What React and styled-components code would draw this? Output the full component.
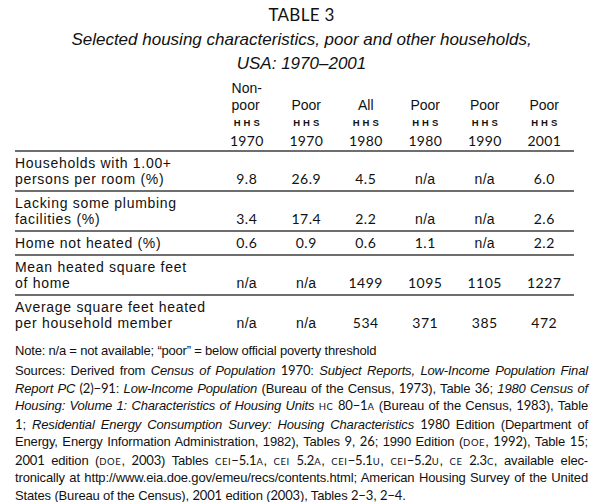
import React from "react";
import styled, { createGlobalStyle } from "styled-components";

const GlobalStyle = createGlobalStyle`
  html, body {
    margin: 0;
    padding: 0;
    background: #ffffff;
  }
`;

const columns = [
  { top: "Non-", label: "poor", year: "1970" },
  { top: "", label: "Poor", year: "1970" },
  { top: "", label: "All", year: "1980" },
  { top: "", label: "Poor", year: "1980" },
  { top: "", label: "Poor", year: "1990" },
  { top: "", label: "Poor", year: "2001" },
];

const rows = [
  { label: ["Households with 1.00+", "persons per room (%)"], values: ["9.8", "26.9", "4.5", "n/a", "n/a", "6.0"] },
  { label: ["Lacking some plumbing", "facilities (%)"], values: ["3.4", "17.4", "2.2", "n/a", "n/a", "2.6"] },
  { label: ["Home not heated (%)"], values: ["0.6", "0.9", "0.6", "1.1", "n/a", "2.2"] },
  { label: ["Mean heated square feet", "of home"], values: ["n/a", "n/a", "1499", "1095", "1105", "1227"] },
  { label: ["Average square feet heated", "per household member"], values: ["n/a", "n/a", "534", "371", "385", "472"] },
];

const App = () => {
  return (
    <>
      <GlobalStyle />
      <Page>
        <Title>TABLE 3</Title>
        <Subtitle>
          Selected housing characteristics, poor and other households,
          <br />
          USA: 1970–2001
        </Subtitle>

        <Table>
          <HeaderRow>
            <div />
            {columns.map((c, i) => (
              <HeadCell key={i}>
                <HeadText>
                  {c.top && <div>{c.top}</div>}
                  <div>{c.label}</div>
                </HeadText>
                <Hhs>HHS</Hhs>
                <Year>{c.year}</Year>
              </HeadCell>
            ))}
          </HeaderRow>

          {rows.map((r, i) => (
            <BodyRow key={i}>
              <Label>
                {r.label.map((l, j) => (
                  <div key={j}>{l}</div>
                ))}
              </Label>
              {r.values.map((v, j) => (
                <Value key={j} $na={v === "n/a"}>
                  {v}
                </Value>
              ))}
            </BodyRow>
          ))}
        </Table>

        <Note>Note: n/a = not available; “poor” = below official poverty threshold</Note>

        <Sources>
          <Line>
            Sources: Derived from <I>Census of Population</I> <N>1970</N>: <I>Subject Reports, Low-Income Population Final</I>
          </Line>
          <Line>
            <I>Report PC</I> <N>(2)−91</N>: <I>Low-Income Population</I> (Bureau of the Census, <N>1973</N>), Table <N>36</N>;{" "}
            <I>1980 Census of</I>
          </Line>
          <Line>
            <I>Housing: Volume 1: Characteristics of Housing Units</I> <SC>hc</SC> <N>80−1</N>
            <SC>a</SC> (Bureau of the Census, <N>1983</N>), Table
          </Line>
          <Line>
            <N>1</N>; <I>Residential Energy Consumption Survey: Housing Characteristics</I> <N>1980</N> Edition (Department of
          </Line>
          <Line>
            Energy, Energy Information Administration, 1982), Tables <N>9</N>, <N>26</N>; 1990 Edition (<SC>doe</SC>,{" "}
            <N>1992</N>), Table <N>15</N>;
          </Line>
          <Line>
            <N>2001</N> edition (<SC>doe</SC>, <N>2003</N>) Tables <SC>cei</SC>
            <N>−5.1</N>
            <SC>a</SC>, <SC>cei</SC> <N>5.2</N>
            <SC>a</SC>, <SC>cei</SC>
            <N>−5.1</N>
            <SC>u</SC>, <SC>cei</SC>
            <N>−5.2</N>
            <SC>u</SC>, <SC>ce</SC> <N>2.3</N>
            <SC>c</SC>, available elec-
          </Line>
          <Line>
            tronically at http://www.eia.doe.gov/emeu/recs/contents.html; American Housing Survey of the United
          </Line>
          <Line $last>
            States (Bureau of the Census), <N>2001</N> edition (<N>2003</N>), Tables <N>2−3</N>, <N>2−4</N>.
          </Line>
        </Sources>
      </Page>
    </>
  );
};

export default App;

const Page = styled.div`
  width: 600px;
  box-sizing: border-box;
  padding: 5px 12px 0 15px;
  font-family: "Liberation Sans", Arial, sans-serif;
  color: #111;
`;

const Title = styled.div`
  font-family: Lato, "Liberation Sans", sans-serif;
  font-size: 17px;
  line-height: 20px;
  text-align: center;
  letter-spacing: 0.3px;
`;

const Subtitle = styled.div`
  margin-top: 3px;
  font-size: 17px;
  line-height: 24px;
  font-style: italic;
  text-align: center;
`;

const Table = styled.div`
  width: 559px;
  margin-top: 4px;
`;

const HeaderRow = styled.div`
  display: grid;
  grid-template-columns: 202px repeat(6, 1fr);
  align-items: end;
  padding-bottom: 1px;
`;

const HeadCell = styled.div`
  display: flex;
  flex-direction: column;
  align-items: center;
`;

const HeadText = styled.div`
  font-size: 14px;
  line-height: 17px;
  text-align: left;
`;

const Hhs = styled.div`
  font-size: 9.5px;
  font-weight: bold;
  line-height: 18px;
  letter-spacing: 3px;
  margin-right: -3px;
`;

const Year = styled.div`
  font-family: Lato, "Liberation Sans", sans-serif;
  font-size: 14px;
  line-height: 17px;
  letter-spacing: 0.3px;
`;

const BodyRow = styled.div`
  display: grid;
  grid-template-columns: 202px repeat(6, 1fr);
  align-items: end;
  border-top: 2px solid #6e6e6e;
  padding: 3px 0;
`;

const Label = styled.div`
  font-size: 14px;
  line-height: 16px;
  letter-spacing: 0.7px;
`;

const Value = styled.div`
  text-align: center;
  font-size: 14px;
  line-height: 16px;
  font-family: ${(p) => (p.$na ? `"Liberation Sans", Arial, sans-serif` : `Lato, "Liberation Sans", sans-serif`)};
  letter-spacing: ${(p) => (p.$na ? "0.3px" : "0.5px")};
`;

const Note = styled.div`
  margin-top: 9px;
  font-size: 13px;
  line-height: 16px;
  letter-spacing: -0.2px;
`;

const Sources = styled.div`
  margin-top: 3px;
  font-size: 13px;
  line-height: 16.5px;
`;

const Line = styled.div`
  white-space: nowrap;
  text-align: ${(p) => (p.$last ? "left" : "justify")};
  text-align-last: ${(p) => (p.$last ? "left" : "justify")};
  letter-spacing: -0.15px;
`;

const I = styled.i`
  font-style: italic;
`;

const N = styled.span`
  font-family: Lato, "Liberation Sans", sans-serif;
  font-size: 13px;
`;

const SC = styled.span`
  font-family: Lato, "Liberation Sans", sans-serif;
  font-size: 9.5px;
  text-transform: uppercase;
  letter-spacing: 0.6px;
`;
